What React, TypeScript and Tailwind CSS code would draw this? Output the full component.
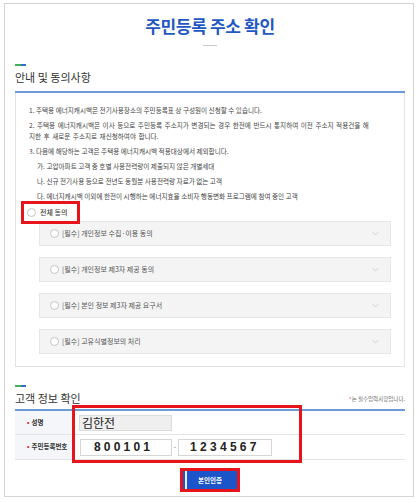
import { ChevronDown } from 'lucide-react';

const subNotices = [
  '가. 고압아파트 고객 중 호별 사용전력량이 제출되지 않은 개별세대',
  '나. 신규 전기사용 등으로 전년도 동월분 사용전력량 자료가 없는 고객',
  '다. 에너지캐시백 이외에 한전이 시행하는 에너지효율 소비자 행동변화 프로그램에 참여 중인 고객',
];

const agreements = [
  '[필수] 개인정보 수집·이용 동의',
  '[필수] 개인정보 제3자 제공 동의',
  '[필수] 본인 정보 제3자 제공 요구서',
  '[필수] 고유식별정보의 처리',
];

function Radio() {
  return <span className="block w-[9px] h-[9px] rounded-full border border-[#c4c4c4] bg-white shrink-0" />;
}

function SectionTitle({ title, right }: { title: string; right?: React.ReactNode }) {
  return (
    <div>
      <div className="flex w-[11px] h-[2px]">
        <span className="flex-1 bg-[#3fb34f]" />
        <span className="flex-1 bg-[#2c6fd1]" />
      </div>
      <div className="flex items-end justify-between h-[16px] mt-[3px]">
        <h2 className="text-[11px] leading-[16px] text-[#333]">{title}</h2>
        {right}
      </div>
    </div>
  );
}

export default function App() {
  return (
    <div
      className="w-[420px] h-[503px] bg-white pt-[3px]"
      style={{ fontFamily: '"Noto Sans CJK KR", "Noto Sans", sans-serif' }}
    >
      <div className="ml-[4px] w-[410px] h-[494px] border border-[#d4d4d4]">
        <div className="ml-[10px] w-[390px]">
          {/* Title */}
          <h1 className="pt-[11px] h-[33px] text-center text-[17px] leading-[22px] font-bold text-[#1f57c3] tracking-[-0.02em]">
            주민등록 주소 확인
          </h1>
          <div className="mx-auto mt-[8px] w-[14px] h-px bg-[#c8c8c8]" />

          {/* 안내 및 동의사항 */}
          <div className="mt-[18px]">
            <SectionTitle title="안내 및 동의사항" />
          </div>
          <div className="mt-[6px] h-[2px] bg-[#6b9bd6]" />
          <div className="border-x border-b border-[#e3e3e3] pt-[12px] pb-[12px]">
            <div className="pl-[13px] text-[6.6px] leading-[11px] text-[#444] flex flex-col gap-[4px]">
              <p className="h-[11px]">1. 주택용 에너지캐시백은 전기사용장소의 주민등록표 상 구성원이 신청할 수 있습니다.</p>
              <p className="h-[22px] [word-spacing:1px]">
                2. 주택용 에너지캐시백은 이사 등으로 주민등록 주소지가 변경되는 경우 한전에 반드시 통지하여 이전 주소지 적용건을 해
                <br />
                지한 후 새로운 주소지로 재신청하여야 합니다.
              </p>
              <p className="h-[11px]">3. 다음에 해당하는 고객은 주택용 에너지캐시백 적용대상에서 제외합니다.</p>
              {subNotices.map((n) => (
                <p key={n} className="h-[11px] pl-[8px]">{n}</p>
              ))}
            </div>

            <div className="relative mt-[1px] h-[18px] flex items-center gap-[4px] pl-[11px] text-[7px] text-[#444] font-medium">
              <Radio />
              <span>전체 동의</span>
              <div className="absolute left-[5px] top-[-2px] w-[59px] h-[23px] border-[3px] border-[#e8141b]" />
            </div>

            <div className="ml-[23px] w-[352px] flex flex-col gap-[11px]">
              {agreements.map((a) => (
                <div
                  key={a}
                  className="h-[25px] flex items-center justify-between bg-[#f4f4f4] border border-[#e6e6e6] pl-[10px] pr-[9px]"
                >
                  <div className="flex items-center gap-[3px] text-[7px] leading-[11px] text-[#555]">
                    <Radio />
                    <span>{a}</span>
                  </div>
                  <ChevronDown size={11} strokeWidth={1} className="text-[#aaa]" />
                </div>
              ))}
            </div>
          </div>

          {/* 고객 정보 확인 */}
          <div className="mt-[18px]">
            <SectionTitle
              title="고객 정보 확인"
              right={
                <span className="text-[5.5px] leading-[12px] text-[#666] mb-[1px]">
                  <span className="text-[#e8141b]">*</span>는 필수입력사항입니다.
                </span>
              }
            />
          </div>
          <div className="relative mt-[3px]">
            <div className="h-[2px] bg-[#6b9bd6]" />
            <div className="flex h-[24px] border-b border-[#e4e4e4]">
              <div className="w-[60px] bg-[#f4f6f9] flex items-center pl-[12px] text-[6.5px] font-bold text-[#333]">
                <span className="text-[#e8141b] mr-[2px]">•</span>성명
              </div>
              <div className="flex items-center pl-[4px]">
                <div className="w-[93px] h-[16px] bg-[#efefef] border border-[#dcdcdc] flex items-center pl-[2px] text-[12px] leading-[14px] text-[#222]">
                  김한전
                </div>
              </div>
            </div>
            <div className="flex h-[25px] border-b border-[#e4e4e4]">
              <div className="w-[60px] bg-[#f4f6f9] flex items-center pl-[12px] text-[6.5px] font-bold text-[#333]">
                <span className="text-[#e8141b] mr-[2px]">•</span>주민등록번호
              </div>
              <div className="flex items-center pl-[5px]">
                <div
                  className="w-[92px] h-[17px] bg-white border border-[#d6d6d6] flex items-center pl-[13px] text-[12px] leading-[14px] font-bold tracking-[3.2px] text-[#222]"
                  style={{ fontFamily: '"Liberation Sans", sans-serif' }}
                >
                  800101
                </div>
                <span className="w-[6px] text-center text-[8px] leading-[10px] text-[#888]">-</span>
                <div
                  className="w-[94px] h-[17px] bg-white border border-[#d6d6d6] flex items-center pl-[11px] text-[12px] leading-[14px] font-bold tracking-[3.3px] text-[#222]"
                  style={{ fontFamily: '"Liberation Sans", sans-serif' }}
                >
                  1234567
                </div>
              </div>
            </div>
            <div className="absolute left-[57px] top-[-4px] w-[230px] h-[58px] border-[3px] border-[#e8141b]" />
          </div>

          <div className="mt-[8px] mx-auto w-[60px] h-[24px] border-[3px] border-[#e8141b]">
            <button className="block w-full h-full bg-[#1b55c9] text-white text-[6.5px] leading-[10px] font-bold shadow-[inset_2px_0_0_#1b55c9,inset_4px_0_0_#e8eefa]">
              본인인증
            </button>
          </div>
        </div>
      </div>
    </div>
  );
}
